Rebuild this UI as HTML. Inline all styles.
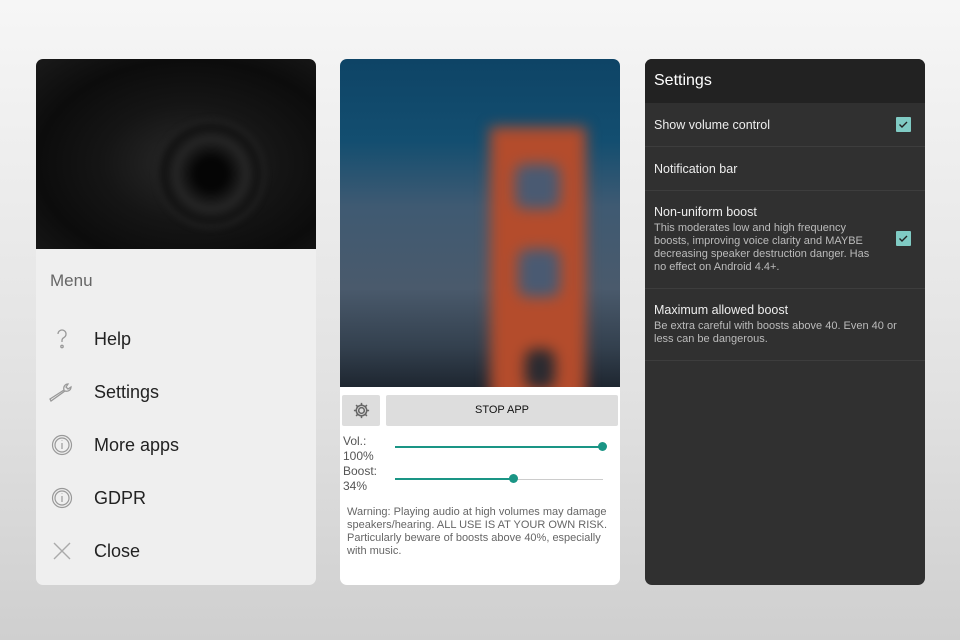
<!DOCTYPE html>
<html><head><style>
*{margin:0;padding:0;box-sizing:border-box}
body{width:960px;height:640px;overflow:hidden;background:linear-gradient(#f6f6f6,#e2e2e2 60%,#cfcfcf);font-family:"Liberation Sans",sans-serif;position:relative}
.p{position:absolute;top:59px;width:280px;height:526px;border-radius:7px;overflow:hidden}
#p1{left:36px;background:#efefef}
#p2{left:340px;background:#fff}
#p3{left:645px;background:#303030}
.mi{position:absolute;left:0;font-size:18px;color:#222;white-space:nowrap;width:280px;height:24px}
.mi span{position:absolute;left:58px;top:0}
.ic{position:absolute;left:14px;top:-2px}
.s3{position:absolute;left:9px;color:#eee}
</style></head><body>
<div class="p" id="p1">
 <div style="height:190px;background:radial-gradient(ellipse at 55% 55%,#2a2a2a,#151515 40%,#0c0c0c 70%,#1a1a1a);position:relative;overflow:hidden">
  <div style="position:absolute;left:120px;top:60px;width:110px;height:110px;border-radius:50%;background:radial-gradient(#050505 20%,#262626 45%,#111 60%,#2a2a2a 75%,transparent 80%);filter:blur(3px)"></div>
 </div>
 <div style="position:absolute;left:14px;top:212px;font-size:17px;color:#666">Menu</div>
 <div class="mi" style="top:270px"><svg class="ic" width="24" height="24" viewBox="0 0 24 24" fill="none" stroke="#999" stroke-width="1.3"><path d="M8 7a4 4 0 1 1 6 3.5c-1.5.8-2 1.6-2 3v1.5"/><circle cx="12" cy="19.5" r="1.2"/></svg><span>Help</span></div>
 <div class="mi" style="top:323px"><svg class="ic" style="left:12px" width="28" height="24" viewBox="0 0 28 24" fill="none" stroke="#999" stroke-width="1.3"><path d="M2 19l14-9c-1-3 1-6 4-6l-2 3 2 2 3-2c0 3-3 5-6 4L3 21z"/></svg><span>Settings</span></div>
 <div class="mi" style="top:376px"><svg class="ic" width="24" height="24" viewBox="0 0 24 24" fill="none" stroke="#999" stroke-width="1.2"><circle cx="12" cy="12" r="9.5"/><circle cx="12" cy="12" r="7"/><path d="M12 10v6M12 7.5v.5"/></svg><span>More apps</span></div>
 <div class="mi" style="top:429px"><svg class="ic" width="24" height="24" viewBox="0 0 24 24" fill="none" stroke="#999" stroke-width="1.2"><circle cx="12" cy="12" r="9.5"/><circle cx="12" cy="12" r="7"/><path d="M12 10v6M12 7.5v.5"/></svg><span>GDPR</span></div>
 <div class="mi" style="top:482px"><svg class="ic" width="24" height="24" viewBox="0 0 24 24" fill="none" stroke="#aaa" stroke-width="1.4"><path d="M4 4l16 16M20 4L4 20"/></svg><span>Close</span></div>
</div>
<div class="p" id="p2">
 <div style="height:328px;position:relative;overflow:hidden;background:linear-gradient(#0e4466,#134e70 25%,#3f5a72 45%,#4a5a6c 70%,#33404e 88%,#1e2630)">
  <div style="position:absolute;inset:0;filter:blur(7px)">
   <div style="position:absolute;left:150px;top:68px;width:96px;height:280px;background:#b44c2c"></div>
   <div style="position:absolute;left:175px;top:105px;width:45px;height:45px;background:#4a5a72;border-radius:10px"></div>
   <div style="position:absolute;left:178px;top:190px;width:42px;height:48px;background:#4a5a72;border-radius:10px"></div>
   <div style="position:absolute;left:185px;top:290px;width:30px;height:40px;background:#2a2a30;border-radius:10px"></div>
  </div>
 </div>
 <div style="position:absolute;left:2px;top:336px;width:38px;height:31px;background:#ddd;border-radius:2px"><svg style="position:absolute;left:10px;top:6px" width="19" height="19" viewBox="0 0 20 20" fill="none" stroke="#666" stroke-width="1.6"><circle cx="10" cy="10" r="3"/><path d="M10 2v3M10 15v3M2 10h3M15 10h3M4.3 4.3l2.1 2.1M13.6 13.6l2.1 2.1M4.3 15.7l2.1-2.1M13.6 6.4l2.1-2.1"/><circle cx="10" cy="10" r="5.5"/></svg></div>
 <div style="position:absolute;left:46px;top:336px;width:232px;height:31px;background:#ddd;border-radius:2px;text-align:center;line-height:31px;font-size:11px;color:#111">STOP APP</div>
 <div style="position:absolute;left:3px;top:375px;font-size:12px;color:#555;line-height:15px">Vol.:<br>100%<br>Boost:<br>34%</div>
 <div style="position:absolute;left:55px;top:387px;width:208px;height:2px;background:#1a9585"></div>
 <div style="position:absolute;left:258px;top:383px;width:9px;height:9px;border-radius:50%;background:#1a9585"></div>
 <div style="position:absolute;left:55px;top:420px;width:208px;height:1px;background:#ccc"></div>
 <div style="position:absolute;left:55px;top:419px;width:118px;height:2px;background:#1a9585"></div>
 <div style="position:absolute;left:169px;top:415px;width:9px;height:9px;border-radius:50%;background:#1a9585"></div>
 <div style="position:absolute;left:7px;top:447px;width:270px;font-size:11px;color:#666;line-height:13px">Warning: Playing audio at high volumes may damage speakers/hearing. ALL USE IS AT YOUR OWN RISK. Particularly beware of boosts above 40%, especially with music.</div>
</div>
<div class="p" id="p3">
 <div style="height:44px;background:#222"><div class="s3" style="top:13px;font-size:16px;color:#fff">Settings</div></div>
 <div class="s3" style="top:59px;font-size:12.5px">Show volume control</div>
 <div style="position:absolute;left:0;right:0;top:87px;height:1px;background:#3d3d3d"></div>
 <div class="s3" style="top:103px;font-size:12.5px">Notification bar</div>
 <div style="position:absolute;left:0;right:0;top:131px;height:1px;background:#3d3d3d"></div>
 <div class="s3" style="top:146px;font-size:12.5px">Non-uniform boost</div>
 <div class="s3" style="top:163px;font-size:11px;line-height:13px;color:#bbb;width:225px">This moderates low and high frequency boosts, improving voice clarity and MAYBE decreasing speaker destruction danger. Has no effect on Android 4.4+.</div>
 <div style="position:absolute;left:0;right:0;top:229px;height:1px;background:#3d3d3d"></div>
 <div class="s3" style="top:244px;font-size:12.5px">Maximum allowed boost</div>
 <div class="s3" style="top:261px;font-size:11px;line-height:13px;color:#bbb;width:255px">Be extra careful with boosts above 40. Even 40 or less can be dangerous.</div>
 <div style="position:absolute;left:0;right:0;top:301px;height:1px;background:#3d3d3d"></div>
 <svg style="position:absolute;left:251px;top:58px" width="15" height="15" viewBox="0 0 15 15"><rect width="15" height="15" rx="1" fill="#80cbc4"/><path d="M3.5 7.5l2.5 2.5 5-5" stroke="#222" stroke-width="1.4" fill="none"/></svg>
 <svg style="position:absolute;left:251px;top:172px" width="15" height="15" viewBox="0 0 15 15"><rect width="15" height="15" rx="1" fill="#80cbc4"/><path d="M3.5 7.5l2.5 2.5 5-5" stroke="#222" stroke-width="1.4" fill="none"/></svg>
</div>
</body></html>
